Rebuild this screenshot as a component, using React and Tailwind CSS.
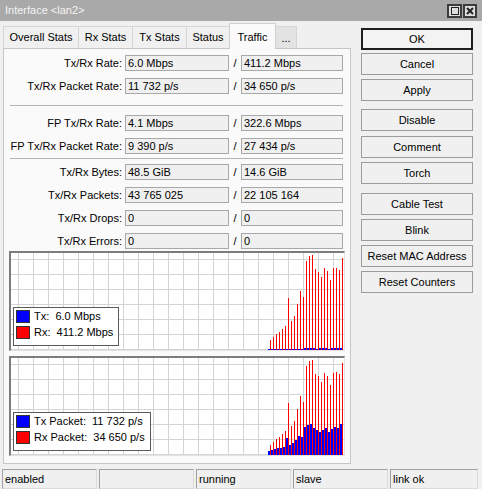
import React from "react";

const rows = [
  { label: "Tx/Rx Rate:", a: "6.0 Mbps", b: "411.2 Mbps", mt: "mt-[6px]" },
  { label: "Tx/Rx Packet Rate:", a: "11 732 p/s", b: "34 650 p/s", mt: "mt-[7px]" },
  { sep: true, mt: "mt-[11px]" },
  { label: "FP Tx/Rx Rate:", a: "4.1 Mbps", b: "322.6 Mbps", mt: "mt-[9px]" },
  { label: "FP Tx/Rx Packet Rate:", a: "9 390 p/s", b: "27 434 p/s", mt: "mt-[7px]" },
  { sep: true, mt: "mt-[4px]" },
  { label: "Tx/Rx Bytes:", a: "48.5 GiB", b: "14.6 GiB", mt: "mt-[5px]" },
  { label: "Tx/Rx Packets:", a: "43 765 025", b: "22 105 164", mt: "mt-[7px]" },
  { label: "Tx/Rx Drops:", a: "0", b: "0", mt: "mt-[7px]" },
  { label: "Tx/Rx Errors:", a: "0", b: "0", mt: "mt-[7px]" },
];

const buttons = [
  { text: "OK", mt: "mt-[7px]", primary: true },
  { text: "Cancel", mt: "mt-[3px]" },
  { text: "Apply", mt: "mt-[4px]" },
  { text: "Disable", mt: "mt-[8px]" },
  { text: "Comment", mt: "mt-[5px]" },
  { text: "Torch", mt: "mt-[4px]" },
  { text: "Cable Test", mt: "mt-[9px]" },
  { text: "Blink", mt: "mt-[4px]" },
  { text: "Reset MAC Address", mt: "mt-[4px]" },
  { text: "Reset Counters", mt: "mt-[4px]" },
];

const tabs = [
  { text: "Overall Stats", w: "w-[76px]" },
  { text: "Rx Stats", w: "w-[55px]" },
  { text: "Tx Stats", w: "w-[55px]" },
  { text: "Status", w: "w-[44px]" },
  { text: "Traffic", w: "w-[47px]", active: true },
  { text: "...", w: "w-[22px]" },
];

const rate = {
  rx: [10, 13, 16, 18, 21, 24, 52, 29, 34, 46, 59, 53, 89, 94, 95, 81, 78, 73, 82, 79, 70, 82, 82, 80, 92],
  tx: [1, 1, 1, 1, 1, 1, 1, 1, 1, 1, 1, 1, 2, 2, 2, 2, 1, 2, 2, 2, 1, 2, 2, 2, 2],
};

const packets = {
  rx: [10, 13, 16, 18, 21, 24, 52, 29, 34, 46, 59, 53, 89, 94, 95, 81, 79, 73, 82, 79, 70, 82, 83, 81, 92],
  tx: [4, 5, 6, 7, 7, 8, 17, 10, 12, 15, 19, 18, 28, 30, 31, 27, 25, 23, 25, 27, 23, 26, 28, 27, 31],
};

function Field({ children, w }) {
  return (
    <div className={`${w} h-[16px] border border-[#a8a8a8] bg-[#f0f0f0] pl-[2px] leading-[14px] whitespace-nowrap`}>
      {children}
    </div>
  );
}

function Chart({ data, legend, legendBox }) {
  const W = 333;
  const H = 97;
  return (
    <div className="relative ml-[5px] w-[336px] border-l-2 border-t-2 border-[#7d7d7d] border-r border-b border-r-[#e3e3e3] border-b-[#e3e3e3] bg-white">
      <svg width={W} height={H} className="block">
        {Array.from({ length: 22 }, (_, k) => (
          <line key={"v" + k} x1={7.5 + 15 * k} x2={7.5 + 15 * k} y1={0} y2={H} stroke="#d4d4d4" />
        ))}
        {Array.from({ length: 7 }, (_, k) => (
          <line key={"h" + k} x1={0} x2={W} y1={96.5 - 15 * k} y2={96.5 - 15 * k} stroke="#d4d4d4" />
        ))}
        {data.tx.map((h, i) => (
          <rect key={"t" + i} x={257 + 3 * i} y={H - h} width={2} height={h} fill="#0000ff" />
        ))}
        {data.rx.map((h, i) => (
          <rect key={"r" + i} x={259 + 3 * i} y={H - h} width={1} height={h} fill="#ff0000" />
        ))}
      </svg>
      <div className={`absolute ${legendBox} border border-[#5a5a5a] bg-white px-[2px] pt-[2px]`}>
        {legend.map((l) => (
          <div key={l.text} className="mb-[3px] flex h-[13px] items-center">
            <span className={`mr-[4px] inline-block h-[13px] w-[14px] border border-[#333] ${l.color}`} />
            <span className="whitespace-pre leading-[13px]">{l.text}</span>
          </div>
        ))}
      </div>
    </div>
  );
}

export default function App() {
  return (
    <div className="flex h-[489px] w-[482px] flex-col overflow-hidden bg-[#f0f0f0] font-['Liberation_Sans',Arial,sans-serif] text-[11px] text-black">
      {/* title bar */}
      <div className="flex h-[21px] items-center bg-[#a9a9a9] pl-[5px] pr-[5px] text-[11px] text-[#f4f4f4]">
        <span className="flex-1">Interface &lt;lan2&gt;</span>
        <div className="mt-[1px] flex gap-[1px]">
          <div className="flex h-[14px] w-[15px] items-center justify-center border-2 border-[#3c3c3c] bg-[#dedede]">
            <div className="h-[8px] w-[8px] border border-[#222]" />
          </div>
          <div className="flex h-[14px] w-[14px] items-center justify-center border-2 border-[#3c3c3c] bg-[#dedede]">
            <svg width="8" height="8" viewBox="0 0 8 8">
              <path d="M1 1 L7 7 M7 1 L1 7" stroke="#222" strokeWidth="2" />
            </svg>
          </div>
        </div>
      </div>

      <div className="flex h-[445px]">
        {/* left: tabs + panel */}
        <div className="ml-[3px] flex w-[348px] flex-col">
          <div className="flex h-[27px] items-end">
            {tabs.map((t, i) => (
              <div
                key={t.text}
                className={
                  t.active
                    ? `${t.w} relative z-10 -mb-px -ml-px flex h-[26px] items-start justify-center border border-b-0 border-[#d0d0d0] bg-[#fafafa] pt-[5px]`
                    : `${t.w} ${i === 0 ? "" : "-ml-px"} flex h-[22px] justify-center border border-b-0 border-[#d6d6d6] ${t.text === "..." ? "items-end bg-[#e3e3e3] pb-[2px]" : "items-center bg-[#f0f0f0]"}`
                }
              >
                {t.text}
              </div>
            ))}
          </div>
          <div className="flex h-[416px] flex-col border border-[#c6c6c6] bg-[#fafafa]">
            {rows.map((r, i) =>
              r.sep ? (
                <div key={i} className={`${r.mt} ml-[6px] h-px w-[333px] bg-[#b4b4b4]`} />
              ) : (
                <div key={i} className={`${r.mt} flex h-[16px] items-center`}>
                  <div className="w-[118px] text-right whitespace-nowrap">{r.label}</div>
                  <div className="w-[3px]" />
                  <Field w="w-[104px]">{r.a}</Field>
                  <div className="w-[12px] text-center">/</div>
                  <Field w="w-[102px]">{r.b}</Field>
                </div>
              )
            )}
            <div className="mt-[2px]">
              <Chart
                data={rate}
                legendBox="left-[2px] top-[54px] w-[106px] h-[39px]"
                legend={[
                  { text: "Tx:  6.0 Mbps", color: "bg-[#0000ff]" },
                  { text: "Rx:  411.2 Mbps", color: "bg-[#ff0000]" },
                ]}
              />
            </div>
            <div className="mt-[5px]">
              <Chart
                data={packets}
                legendBox="left-[2px] top-[54px] w-[138px] h-[39px]"
                legend={[
                  { text: "Tx Packet:  11 732 p/s", color: "bg-[#0000ff]" },
                  { text: "Rx Packet:  34 650 p/s", color: "bg-[#ff0000]" },
                ]}
              />
            </div>
          </div>
        </div>

        {/* right: buttons */}
        <div className="ml-[10px] flex w-[112px] flex-col">
          {buttons.map((b) => (
            <button
              key={b.text}
              className={`${b.mt} flex h-[22px] w-[112px] items-center justify-center text-[11px] ${
                b.primary ? "border-2 border-[#1e1e1e] bg-[#f3f3f3]" : "border border-[#9c9c9c] bg-[#f0f0f0]"
              }`}
            >
              {b.text}
            </button>
          ))}
        </div>
      </div>

      {/* status bar */}
      <div className="mt-[3px] flex h-[20px] gap-[2px] pl-[2px]">
        {["enabled", "", "running", "slave", "link ok"].map((s, i) => (
          <div
            key={i}
            className={`${i === 4 ? "w-[88px]" : "w-[95px]"} flex h-[20px] items-center border border-[#a0a0a0] border-r-[#dcdcdc] border-b-[#dcdcdc] pl-[2px] text-[11px]`}
          >
            {s}
          </div>
        ))}
      </div>
    </div>
  );
}
